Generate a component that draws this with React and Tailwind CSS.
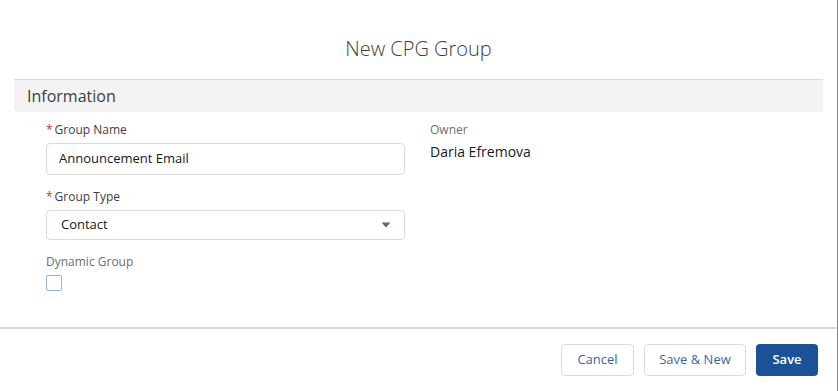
import React from "react"

const font = { fontFamily: '"Open Sans", "Liberation Sans", sans-serif' }

function Label({ children, required, muted }) {
  return (
    <div className={`text-[12px] leading-[18px] ${muted ? "text-[#706e6b]" : "text-[#3e3e3c]"}`}>
      {required && <span className="text-[#c23934] mr-[2px]">*</span>}
      {children}
    </div>
  )
}

export default function App() {
  return (
    <div
      className="w-[838px] h-[391px] bg-white border-r border-[#8c8c8c] flex flex-col text-[#080707]"
      style={font}
    >
      {/* Modal header */}
      <div className="h-[79px] pt-[35px] text-center text-[20px] leading-[28px] font-light text-[#3e3e3c]">
        New CPG Group
      </div>

      {/* Section title */}
      <div className="mx-[14px] h-[33px] border-t border-[#dddbda] bg-[#f3f3f3] rounded-b-[4px] px-[13px] flex items-center text-[16px] text-[#3e3e3c]">
        Information
      </div>

      {/* Form */}
      <div className="pl-[46px] pr-[48px] pt-[9px] grid grid-cols-2 gap-x-[25px]">
        <div className="flex flex-col">
          <Label required>Group Name</Label>
          <div className="mt-[4px] h-[32px] border border-[#dddbda] rounded-[4px] px-[12px] flex items-center text-[13px] text-[#181818]">
            Announcement Email
          </div>

          <div className="mt-[13px]">
            <Label required>Group Type</Label>
          </div>
          <div className="mt-[4px] h-[30px] border border-[#dddbda] rounded-[4px] pl-[14px] pr-[13px] flex items-center justify-between text-[13px] text-[#181818]">
            <span>Contact</span>
            <svg width="10" height="6" viewBox="0 0 10 6">
              <path d="M0.5 0.5 L9.5 0.5 L5 5.5 Z" fill="#54698d" />
            </svg>
          </div>

          <div className="mt-[13px]">
            <Label muted>Dynamic Group</Label>
          </div>
          <div className="mt-[4px] w-[16px] h-[16px] border border-[#8fb0e3] rounded-[2px] bg-white" />
        </div>

        <div className="flex flex-col">
          <Label muted>Owner</Label>
          <div className="mt-[3px] text-[14px] leading-[20px] text-[#16191f]">Daria Efremova</div>
        </div>
      </div>

      <div className="flex-1" />

      {/* Footer */}
      <div className="h-[64px] border-t-2 border-[#dddbda] flex items-center justify-end gap-[10px] pr-[19px] text-[13px]">
        <button className="h-[32px] w-[73px] border border-[#dddbda] rounded-[4px] bg-white text-[#3a66a6]">
          Cancel
        </button>
        <button className="h-[32px] w-[102px] border border-[#dddbda] rounded-[4px] bg-white text-[#3a66a6]">
          Save &amp; New
        </button>
        <button className="h-[32px] w-[62px] rounded-[4px] bg-[#1b5297] text-white font-semibold">
          Save
        </button>
      </div>
    </div>
  )
}
